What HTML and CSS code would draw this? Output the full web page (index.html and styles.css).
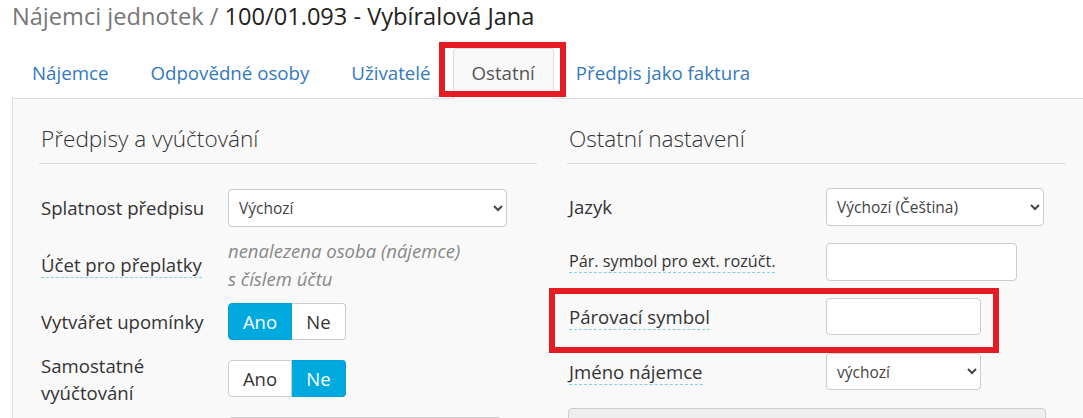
FILE: index.html
```html
<!DOCTYPE html>
<html>
<head>
<meta charset="utf-8">
<title>Nájemci jednotek</title>
<link rel="stylesheet" href="styles.css">
</head>
<body>
  <h1 class="page-title"><span class="crumb">Nájemci jednotek /</span> 100/01.093 - Vybíralová Jana</h1>

  <ul class="tabs">
    <li class="tab"><a href="#">Nájemce</a></li>
    <li class="tab"><a href="#">Odpovědné osoby</a></li>
    <li class="tab"><a href="#">Uživatelé</a></li>
    <li class="tab active marked"><a href="#">Ostatní</a></li>
    <li class="tab"><a href="#">Předpis jako faktura</a></li>
  </ul>

  <div class="panel">
    <div class="cols">
      <section class="col left">
        <h2>Předpisy a vyúčtování</h2>

        <div class="field">
          <label class="lbl">Splatnost předpisu</label>
          <select class="ctl sel-wide"><option>Výchozí</option></select>
        </div>

        <div class="field">
          <label class="lbl"><span class="hint">Účet pro přeplatky</span></label>
          <p class="note">nenalezena osoba (nájemce)<br>s číslem účtu</p>
        </div>

        <div class="field">
          <label class="lbl">Vytvářet upomínky</label>
          <div class="btn-group">
            <button class="btn on">Ano</button><button class="btn">Ne</button>
          </div>
        </div>

        <div class="field">
          <label class="lbl">Samostatné vyúčtování</label>
          <div class="btn-group">
            <button class="btn">Ano</button><button class="btn on">Ne</button>
          </div>
        </div>

        <div class="field">
          <label class="lbl">Uživatelský výpis</label>
          <select class="ctl sel-wide2"><option>Výchozí</option></select>
        </div>
      </section>

      <section class="col right">
        <h2>Ostatní nastavení</h2>

        <div class="field">
          <label class="lbl">Jazyk</label>
          <select class="ctl sel-lang"><option>Výchozí (Čeština)</option></select>
        </div>

        <div class="field">
          <label class="lbl small"><span class="hint">Pár. symbol pro ext. rozúčt.</span></label>
          <input class="ctl inp-mid" type="text">
        </div>

        <div class="field marked">
          <label class="lbl"><span class="hint">Párovací symbol</span></label>
          <input class="ctl inp-short" type="text">
        </div>

        <div class="field">
          <label class="lbl"><span class="hint">Jméno nájemce</span></label>
          <select class="ctl inp-short"><option>výchozí</option></select>
        </div>

        <div class="well"></div>
      </section>
    </div>
  </div>
</body>
</html>
```

FILE: styles.css
```css
body{
  margin: 0;
  font-family: "Open Sans", "Noto Sans", sans-serif;
  color: #333;
  background: #fff;
  overflow: hidden;
}

.page-title{
  margin: 0;
  padding: 0 12px;
  font-size: 23.6px;
  font-weight: 400;
  line-height: 33px;
  height: 48px;
  color: #222;
}
.crumb{
  color: #777;
}

/* tabs */
.tabs{
  display: flex;
  list-style: none;
  margin: 0 0 0 12px;
  padding: 0;
  border-bottom: 1px solid #ddd;
}
.tab{
  position: relative;
  margin-right: 2px;
  margin-bottom: -1px;
}
.tab a{
  display: block;
  height: 49px;
  line-height: 47px;
  padding: 0 19px;
  font-size: 18.7px;
  color: #3479bd;
  text-decoration: none;
  border: 1px solid transparent;
  border-bottom: none;
  border-radius: 4px 4px 0 0;
}
.tab.active a{
  height: 50px;
  padding: 0 18px;
  color: #555;
  background: #f9f9f9;
  border-color: #ddd;
}

/* red marks drawn over the screenshot */
.marked{
  position: relative;
}
.marked::after{
  content: "";
  position: absolute;
  border: 6px solid #e31b23;
  pointer-events: none;
}
.tab.marked::after{
  top: -6px;
  bottom: 2px;
  left: -14px;
  right: -12px;
}
.field.marked::after{
  top: -1px;
  bottom: -9px;
  left: -18px;
  right: 67px;
}

/* panel */
.panel{
  margin-left: 12px;
  border-left: 1px solid #ddd;
  background: #f9f9f9;
  padding-left: 26px;
  height: 400px;
}
.cols{
  display: grid;
  grid-template-columns: 498px 499px;
  column-gap: 30px;
}
.col h2{
  margin: 0 0 15px;
  padding: 24px 0 8px 2px;
  font-size: 22.6px;
  font-weight: 300;
  line-height: 32px;
  border-bottom: 1px solid #ddd;
}

.field{
  display: flex;
  align-items: center;
  min-height: 57px;
}
.right .field{
  min-height: 55px;
}
.lbl{
  padding-left: 2px;
  font-size: 18.6px;
  line-height: 27px;
}
.left .lbl{
  width: 175px;
  margin-right: 12px;
}
.right .lbl{
  width: 257px;
}
.lbl.small{
  font-size: 16.2px;
}
.hint{
  border-bottom: 1px dashed #8ccbe2;
}

.note{
  margin: 0;
  font-size: 18.5px;
  line-height: 28px;
  font-style: italic;
  color: #888;
}

.ctl{
  box-sizing: border-box;
  height: 38px;
  padding: 0 6px;
  font-family: inherit;
  font-size: 15.5px;
  color: #444;
  background: #fff;
  border: 1px solid #ccc;
  border-radius: 4px;
}
.sel-wide{ width: 279px; }
.sel-wide2{ width: 274px; }
.sel-lang{ width: 218px; }
.inp-mid{ width: 191px; }
.inp-short{ width: 155px; height: 37px; }

.btn-group{
  display: flex;
}
.btn{
  height: 37px;
  padding: 0;
  font-family: inherit;
  font-size: 18.5px;
  color: #333;
  background: #fff;
  border: 1px solid #ccc;
}
.btn:first-child{
  width: 64px;
  border-radius: 4px 0 0 4px;
}
.btn:last-child{
  width: 54px;
  border-left: none;
  border-radius: 0 4px 4px 0;
}
.btn.on{
  color: #fff;
  background: #00aade;
  border-color: #00a0d4;
}

.well{
  margin-top: 9px;
  width: 476px;
  height: 40px;
  margin-left: 1px;
  background: #eee;
  border: 1px solid #ccc;
  border-radius: 4px;
}
```
